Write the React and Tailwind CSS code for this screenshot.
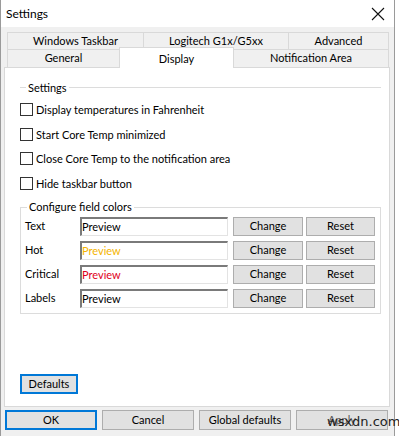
import React from "react";

const font = { fontFamily: 'Lato, "Liberation Sans", sans-serif' };

function Tab({ w, children, selected, last }) {
  return (
    <div
      className={`flex items-center justify-center border-t border-l border-[#d9d9d9] ${last ? "border-r" : ""} ${selected ? "bg-white" : "bg-[#f0f0f0]"}`}
      style={{ width: w }}
    >
      {children}
    </div>
  );
}

function Checkbox({ label }) {
  return (
    <div className="flex items-center h-[13px]">
      <div className="w-[13px] h-[13px] border border-[#333333] bg-white" />
      <span className="ml-[3px] leading-none">{label}</span>
    </div>
  );
}

function Btn({ w, children, className = "" }) {
  return (
    <div
      className={`flex items-center justify-center h-[19px] bg-[#e1e1e1] border border-[#adadad] ${className}`}
      style={{ width: w }}
    >
      {children}
    </div>
  );
}

function ColorRow({ label, color }) {
  return (
    <div className="flex items-center h-[19px]">
      <div className="w-[59px] pl-[4px]">{label}</div>
      <div className="w-[148px] h-[19px] bg-white border-t-2 border-l-2 border-t-[#7a7a7a] border-l-[#7a7a7a] border-b border-r border-b-[#e3e3e3] border-r-[#e3e3e3] flex items-center">
        <span className={`leading-none ${color}`}>Preview</span>
      </div>
      <Btn w={70} className="ml-[5px]">Change</Btn>
      <Btn w={69} className="ml-[3px]">Reset</Btn>
    </div>
  );
}

export default function App() {
  return (
    <div className="w-[399px] h-[436px] bg-white text-[11px] text-black overflow-hidden" style={font}>
      <div className="relative w-[395px] h-[436px] border-l border-r border-[#9a9a9a] flex flex-col">
        {/* Title bar */}
        <div className="h-[27px] bg-white flex items-center justify-between pl-[5px] pr-[8px] shrink-0">
          <span className="text-[12px]">Settings</span>
          <svg width="14" height="14" viewBox="0 0 14 14" className="mr-[1px]">
            <path d="M1 1 L13 13 M13 1 L1 13" stroke="#111" strokeWidth="1.1" />
          </svg>
        </div>
        {/* Body */}
        <div className="flex-1 bg-[#f0f0f0] flex flex-col pl-[3px]">
          {/* tabs */}
          <div className="pt-[5px] pl-[3px] flex flex-col">
            <div className="flex h-[17px]">
              <Tab w={136}>Windows Taskbar</Tab>
              <Tab w={145}>Logitech G1x/G5xx</Tab>
              <Tab w={101} last>Advanced</Tab>
            </div>
            <div className="flex h-[18px] relative">
              <Tab w={112}>General</Tab>
              <div className="relative w-[115px] z-10 -mt-[2px] h-[21px] bg-white border-t border-l border-r border-[#d9d9d9] flex items-start justify-center pt-[3px]">
                Display
              </div>
              <div className="w-[155px] flex items-center justify-center border-t border-r border-[#d9d9d9] bg-[#f0f0f0]">
                Notification Area
              </div>
            </div>
          </div>
          {/* panel */}
          <div className="w-[386px] h-[340px] bg-white border border-[#d9d9d9] flex flex-col pl-[15px]">
            {/* Settings separator group */}
            <div className="flex items-center mt-[14px] w-[361px]">
              <div className="w-[6px] h-px bg-[#dcdcdc]" />
              <span className="px-[2px] leading-none">Settings</span>
              <div className="flex-1 h-px bg-[#dcdcdc]" />
            </div>
            <div className="flex flex-col gap-[11.5px] mt-[10px]">
              <Checkbox label="Display temperatures in Fahrenheit" />
              <Checkbox label="Start Core Temp minimized" />
              <Checkbox label="Close Core Temp to the notification area" />
              <Checkbox label="Hide taskbar button" />
            </div>
            {/* Colors group */}
            <div className="mt-[17px] w-[361px] h-[107px] border border-[#dcdcdc] relative flex flex-col gap-[5px] pt-[9px]">
              <span className="absolute -top-[7px] left-[6px] bg-white px-[2px] leading-none">Configure field colors</span>
              <ColorRow label="Text" color="text-black" />
              <ColorRow label="Hot" color="text-[#f4b400]" />
              <ColorRow label="Critical" color="text-[#e0001b]" />
              <ColorRow label="Labels" color="text-black" />
            </div>
            <div className="flex-1" />
            <div className="mb-[12px] w-[58px] h-[20px] border-2 border-[#0078d7] bg-[#e1e1e1] flex items-center justify-center">
              Defaults
            </div>
          </div>
          {/* bottom buttons */}
          <div className="flex mt-[3px] h-[20px] gap-[5px] pl-[1px]">
            <div className="w-[92px] h-[20px] border-2 border-[#0078d7] bg-[#e1e1e1] flex items-center justify-center">OK</div>
            <Btn w={92} className="h-[20px]">Cancel</Btn>
            <Btn w={92} className="h-[20px]">Global defaults</Btn>
            <Btn w={92} className="h-[20px] text-[#555]">Apply</Btn>
          </div>
        </div>
        <span className="absolute left-[326px] top-[415px] text-[13px] leading-none text-[#222]" style={{ fontFamily: '"DejaVu Sans", sans-serif' }}>
          wsxdn.com
        </span>
      </div>
    </div>
  );
}
